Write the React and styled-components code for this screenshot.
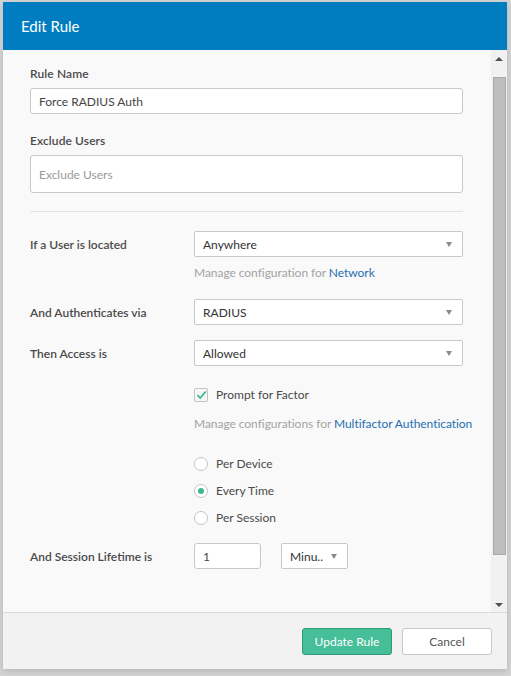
import styled, { createGlobalStyle } from "styled-components";

const GlobalStyle = createGlobalStyle`
  html, body {
    margin: 0;
    padding: 0;
    background: #d4d4d4;
  }
  body {
    font-family: Lato, "Liberation Sans", Arial, sans-serif;
    -webkit-font-smoothing: antialiased;
  }
`;

const Backdrop = styled.div`
  width: 511px;
  height: 676px;
  padding: 2px 4px 7px 3px;
  box-sizing: border-box;
  background: #d4d4d4;
`;

const Modal = styled.div`
  height: 100%;
  display: flex;
  flex-direction: column;
  background: #f9f9f9;
  box-shadow: 0 2px 6px rgba(0, 0, 0, 0.15);
`;

const Header = styled.div`
  height: 48px;
  flex: none;
  background: #007dc1;
  color: #fff;
  font-size: 15px;
  display: flex;
  align-items: center;
  padding-left: 18px;
`;

const BodyWrap = styled.div`
  flex: 1;
  display: flex;
  min-height: 0;
  border-bottom: 1px solid #dcdcdc;
`;

const Body = styled.div`
  flex: 1;
  min-width: 0;
  padding: 16px 28px 0 27px;
  color: #333;
  font-size: 12px;
`;

const Scrollbar = styled.div`
  width: 16px;
  flex: none;
  background: #f1f1f1;
  display: flex;
  flex-direction: column;
  align-items: center;
`;

const Arrow = styled.div`
  width: 0;
  height: 0;
  border-left: 4px solid transparent;
  border-right: 4px solid transparent;
  ${(p) =>
    p.$down
      ? "border-top: 4px solid #505050; margin: 6px 0 5px;"
      : "border-bottom: 4px solid #505050; margin: 7px 0 5px;"}
`;

const Thumb = styled.div`
  width: 13px;
  height: 478px;
  margin-top: 11px;
  background: #bdbdbd;
  border: 1px solid #a9a9a9;
  box-sizing: border-box;
`;

const ScrollGap = styled.div`
  flex: 1;
`;

const Label = styled.div`
  font-weight: 600;
  color: #4a4a4a;
  font-size: 12px;
  margin-bottom: 7px;
  letter-spacing: 0.1px;
`;

const TextInput = styled.div`
  height: ${(p) => p.$h || 26}px;
  box-sizing: border-box;
  border: 1px solid #c8c8c8;
  border-radius: 3px;
  background: #fff;
  display: flex;
  align-items: center;
  padding-left: 8px;
  font-size: 12px;
  color: ${(p) => (p.$placeholder ? "#999" : "#444")};
  width: ${(p) => (p.$w ? `${p.$w}px` : "auto")};
  margin-bottom: ${(p) => p.$mb || 0}px;
`;

const Divider = styled.div`
  height: 1px;
  background: #e3e3e3;
  margin: 18px 0 19px;
`;

const Row = styled.div`
  display: grid;
  grid-template-columns: 164px minmax(0, 1fr);
  align-items: start;
  margin-bottom: ${(p) => p.$mb || 0}px;
`;

const RowLabel = styled.div`
  font-weight: 600;
  color: #4a4a4a;
  padding-top: ${(p) => p.$pt ?? 6}px;
`;

const Select = styled.div`
  height: 26px;
  box-sizing: border-box;
  border: 1px solid #c8c8c8;
  border-radius: 2px;
  background: #fff;
  display: flex;
  align-items: center;
  justify-content: space-between;
  padding: 0 10px 0 8px;
  color: #333;
  width: ${(p) => (p.$w ? `${p.$w}px` : "auto")};
  &::after {
    content: "";
    border-left: 3.5px solid transparent;
    border-right: 3.5px solid transparent;
    border-top: 5px solid #8a8a8a;
  }
`;

const Help = styled.div`
  color: #a3a3a3;
  white-space: nowrap;
  letter-spacing: -0.05px;
  margin-top: ${(p) => p.$mt || 0}px;
  a {
    color: #1f6fb0;
    text-decoration: none;
  }
`;

const Options = styled.div`
  display: flex;
  flex-direction: column;
  min-width: 0;
`;

const Check = styled.div`
  display: flex;
  align-items: center;
  gap: 8px;
  color: #4a4a4a;
  margin-top: 21px;
`;

const Box = styled.span`
  width: 14px;
  height: 14px;
  box-sizing: border-box;
  border: 1px solid #c4c4c4;
  border-radius: 2px;
  background: #f6f6f6;
  display: flex;
  align-items: center;
  justify-content: center;
`;

const RadioList = styled.div`
  display: flex;
  flex-direction: column;
  gap: 12px;
  margin-top: 25px;
`;

const Radio = styled.div`
  display: flex;
  align-items: center;
  gap: 8px;
  color: #4a4a4a;
  height: 15px;
`;

const Dot = styled.span`
  width: 14px;
  height: 14px;
  box-sizing: border-box;
  border-radius: 50%;
  border: 1px solid #c4c4c4;
  background: #fff;
  display: flex;
  align-items: center;
  justify-content: center;
  &::after {
    content: "";
    width: 6px;
    height: 6px;
    border-radius: 50%;
    background: ${(p) => (p.$on ? "#3cb88e" : "transparent")};
  }
`;

const Inline = styled.div`
  display: flex;
  gap: 20px;
`;

const Footer = styled.div`
  height: 56px;
  flex: none;
  background: #f2f2f2;
  display: flex;
  align-items: center;
  justify-content: flex-end;
  gap: 10px;
  padding-right: 15px;
`;

const Button = styled.button`
  width: 90px;
  height: 27px;
  border-radius: 3px;
  font-family: inherit;
  font-size: 12px;
  cursor: pointer;
  border: 1px solid ${(p) => (p.$primary ? "#2f9a79" : "#c8c8c8")};
  background: ${(p) => (p.$primary ? "#46be98" : "#fff")};
  color: ${(p) => (p.$primary ? "#fff" : "#555")};
`;

export default function App() {
  return (
    <>
      <GlobalStyle />
      <Backdrop>
        <Modal>
          <Header>Edit Rule</Header>
          <BodyWrap>
            <Body>
              <Label>Rule Name</Label>
              <TextInput $mb={19}>Force RADIUS Auth</TextInput>
              <Label>Exclude Users</Label>
              <TextInput $h={38} $placeholder>
                Exclude Users
              </TextInput>
              <Divider />
              <Row $mb={19}>
                <RowLabel>If a User is located</RowLabel>
                <Options>
                  <Select>Anywhere</Select>
                  <Help $mt={8}>
                    Manage configuration for <a href="#">Network</a>
                  </Help>
                </Options>
              </Row>
              <Row $mb={15}>
                <RowLabel>And Authenticates via</RowLabel>
                <Select>RADIUS</Select>
              </Row>
              <Row $mb={18}>
                <RowLabel>Then Access is</RowLabel>
                <Options>
                  <Select>Allowed</Select>
                  <Check>
                    <Box>
                      <svg width="11" height="10" viewBox="0 0 11 10">
                        <path d="M1.5 5.2 L4.2 8 L9.8 1.5" fill="none" stroke="#3cb88e" strokeWidth="1.8" />
                      </svg>
                    </Box>
                    Prompt for Factor
                  </Check>
                  <Help $mt={14}>
                    Manage configurations for <a href="#">Multifactor Authentication</a>
                  </Help>
                  <RadioList>
                    <Radio>
                      <Dot />
                      Per Device
                    </Radio>
                    <Radio>
                      <Dot $on />
                      Every Time
                    </Radio>
                    <Radio>
                      <Dot />
                      Per Session
                    </Radio>
                  </RadioList>
                </Options>
              </Row>
              <Row>
                <RowLabel $pt={6}>And Session Lifetime is</RowLabel>
                <Inline>
                  <TextInput $w={67}>1</TextInput>
                  <Select $w={67}>Minu..</Select>
                </Inline>
              </Row>
            </Body>
            <Scrollbar>
              <Arrow />
              <Thumb />
              <ScrollGap />
              <Arrow $down />
            </Scrollbar>
          </BodyWrap>
          <Footer>
            <Button $primary>Update Rule</Button>
            <Button>Cancel</Button>
          </Footer>
        </Modal>
      </Backdrop>
    </>
  );
}
